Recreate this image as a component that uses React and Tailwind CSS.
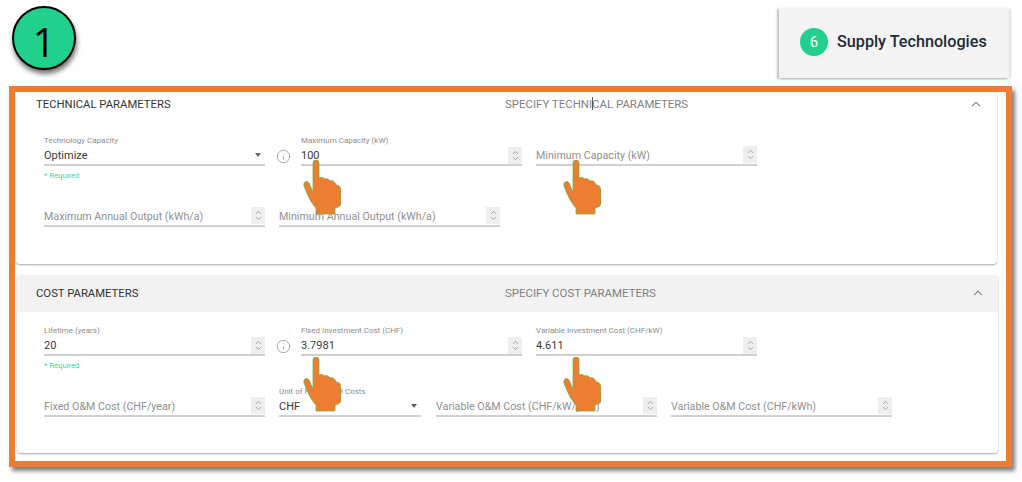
import { ChevronUp, ChevronDown, Info } from "lucide-react";

function Spinner() {
  return (
    <span className="flex h-[17px] w-[14px] flex-col items-center justify-center bg-[#eeeef1] text-[#7d7d7d]">
      <ChevronUp size={9} strokeWidth={1.75} className="-mb-[1.5px]" />
      <ChevronDown size={9} strokeWidth={1.75} className="-mt-[1.5px]" />
    </span>
  );
}

function Field({ label, value, placeholder, select, width = "w-[221px]" }) {
  return (
    <div className={`${width} flex h-8 shrink-0 flex-col border-b-2 border-[#d0d0d0]`}>
      <div className="h-3 pt-px text-[8px] leading-3 text-[#8c8c8c]">{label}</div>
      <div className="flex flex-1 items-center justify-between">
        {value ? (
          <span className="pt-[2px] text-[11px] text-[#3a3a3a]">{value}</span>
        ) : (
          <span className="pt-[2px] text-[10.7px] text-[#8f8f8f]">{placeholder}</span>
        )}
        {select ? (
          <span className="mr-1 h-0 w-0 border-x-[3.5px] border-t-[4px] border-x-transparent border-t-[#666666]" />
        ) : (
          <Spinner />
        )}
      </div>
    </div>
  );
}

function InfoSlot() {
  return (
    <div className="flex w-9 shrink-0 justify-center pt-[15px] text-[#8f8f8f]">
      <Info size={15} strokeWidth={1.25} />
    </div>
  );
}

function Required() {
  return <div className="mt-[5px] text-[7.7px] leading-[10px] text-[#3fd69a]">* Required</div>;
}

function Hand({ className }) {
  return (
    <svg viewBox="0 0 38 55" className={`absolute h-[55px] w-[38px] ${className}`}>
      <path
        d="M10 3a3 3 0 0 1 6 0V18C18 17 20 17 21 19C23 18 26 19 27 21C29 20 32 21 33 25C36 25 38 27 38 31V43C38 46 36 47 32 48V54H13V48C8 43 5 36 1 26C0 22 4 20 6 23L10 32Z"
        fill="#ed7d31"
        stroke="#70ad47"
        strokeWidth="0.75"
      />
    </svg>
  );
}

export default function App() {
  return (
    <div className="relative h-[482px] w-[1022px] overflow-hidden bg-white font-['Roboto',sans-serif]">
      <div className="flex h-[86px] items-start justify-between pr-[13px] pl-3 pt-1.5">
        <div className="flex h-16 w-16 items-center justify-center rounded-full border-2 border-black bg-[#21d08c] pt-2 font-['Open_Sans',sans-serif] text-[40px] text-black shadow-[1px_4px_5px_rgba(0,0,0,0.55)]">
          1
        </div>
        <div className="mt-[2px] flex h-[70px] w-[230px] items-center bg-[#f3f3f3] pl-[21px] pb-[2px] shadow-[-2px_1px_2px_rgba(0,0,0,0.25),2px_1px_2px_rgba(0,0,0,0.12)]">
          <span className="flex h-7 w-7 items-center justify-center rounded-full bg-[#21d08c] text-[15px] text-white">6</span>
          <span className="ml-[9px] text-[16.2px] font-medium text-[#222b36]">Supply Technologies</span>
        </div>
      </div>

      <div className="ml-[9px] h-[381px] w-[1003px] border-[6px] border-[#ed7d31] bg-white shadow-[3px_4px_4px_rgba(0,0,0,0.5)]">
        <div className="ml-px mr-[9px] rounded-b bg-white pb-[37px] shadow-[0_1px_2px_rgba(0,0,0,0.35)]">
          <div className="flex h-[26px] items-center pl-5 pr-[14px]">
            <span className="w-[469px] text-[11.3px] text-[#333333]">TECHNICAL PARAMETERS</span>
            <span className="relative flex-1 text-[11.45px] text-[#808080]">
              SPECIFY TECHNICAL PARAMETERS
              <span className="absolute left-[87px] top-[1px] h-[13px] w-px bg-[#555555]" />
            </span>
            <ChevronUp size={14} strokeWidth={1.75} className="mb-[3px] text-[#666666]" />
          </div>
          <div className="pl-7 pt-4">
            <div className="flex h-[61px] items-start">
              <div>
                <Field label="Technology Capacity" value="Optimize" select />
                <Required />
              </div>
              <InfoSlot />
              <Field label="Maximum Capacity (kW)" value="100" />
              <div className="ml-[14px]">
                <Field placeholder="Minimum Capacity (kW)" />
              </div>
            </div>
            <div className="flex gap-[14px]">
              <Field placeholder="Maximum Annual Output (kWh/a)" />
              <Field placeholder="Minimum Annual Output (kWh/a)" />
            </div>
          </div>
        </div>

        <div className="ml-[2px] mr-2 mt-[11px] rounded bg-white pb-9 shadow-[0_1px_2px_rgba(0,0,0,0.35)]">
          <div className="flex h-[37px] items-center rounded-t bg-[#f2f2f2] pl-[19px] pr-[13px] pt-px">
            <span className="w-[469px] text-[11.3px] text-[#333333]">COST PARAMETERS</span>
            <span className="flex-1 text-[11.45px] text-[#808080]">SPECIFY COST PARAMETERS</span>
            <ChevronUp size={14} strokeWidth={1.75} className="mb-[3px] text-[#666666]" />
          </div>
          <div className="pl-[27px] pt-3">
            <div className="flex h-[61px] items-start">
              <div>
                <Field label="Lifetime (years)" value="20" />
                <Required />
              </div>
              <InfoSlot />
              <Field label="Fixed Investment Cost (CHF)" value="3.7981" />
              <div className="ml-[14px]">
                <Field label="Variable Investment Cost (CHF/kW)" value="4.611" />
              </div>
            </div>
            <div className="flex gap-[14px]">
              <Field placeholder="Fixed O&M Cost (CHF/year)" />
              <Field label="Unit of Fixed O&M Costs" value="CHF" select width="w-[142px]" />
              <div className="ml-px">
                <Field placeholder="Variable O&M Cost (CHF/kW/year)" />
              </div>
              <Field placeholder="Variable O&M Cost (CHF/kWh)" />
            </div>
          </div>
        </div>
      </div>

      <Hand className="left-[303px] top-[160px]" />
      <Hand className="left-[563px] top-[160px]" />
      <Hand className="left-[303px] top-[357px]" />
      <Hand className="left-[563px] top-[357px]" />
    </div>
  );
}
